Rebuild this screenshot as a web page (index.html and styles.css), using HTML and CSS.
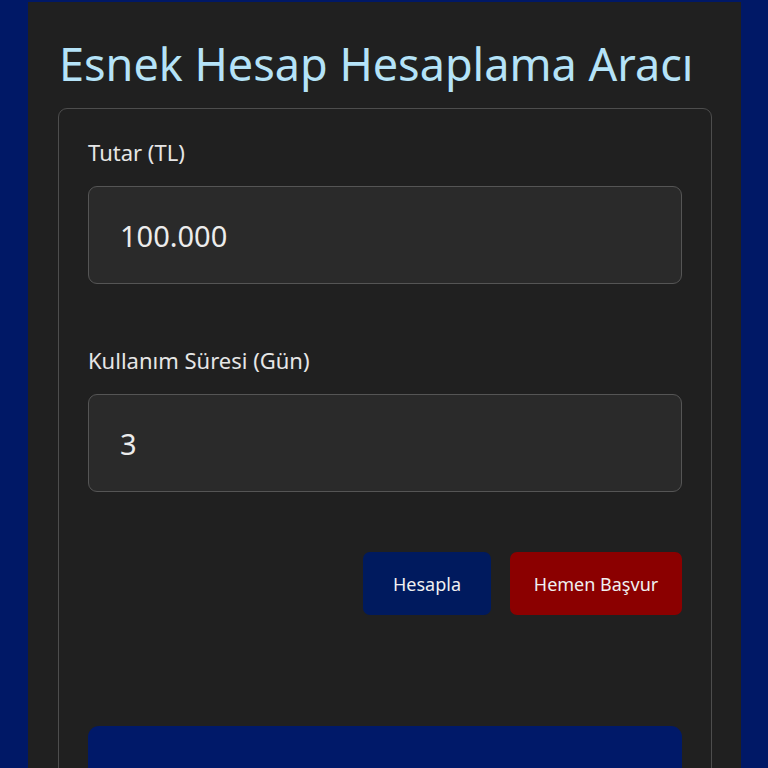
FILE: index.html
```html
<!DOCTYPE html>
<html lang="tr">
<head>
  <meta charset="UTF-8">
  <meta name="viewport" content="width=device-width, initial-scale=1.0">
  <title>Esnek Hesap Hesaplama Aracı</title>
  <link rel="stylesheet" href="styles.css">
</head>
<body>

  <div id="app">
    <h1>Esnek Hesap Hesaplama Aracı</h1>

    <div class="card">
      <div class="field">
        <label for="amount">Tutar (TL)</label>
        <input type="text" id="amount" value="100.000">
      </div>

      <div class="field">
        <label for="days">Kullanım Süresi (Gün)</label>
        <input type="text" id="days" value="3">
      </div>

      <div class="actions">
        <button class="calc">Hesapla</button>
        <button class="apply">Hemen Başvur</button>
      </div>

      <div class="result"></div>
    </div>
  </div>

</body>
</html>
```

FILE: styles.css
```css
body {
  font-family: 'Noto Sans', sans-serif;
  margin: 0;
  padding: 2px 27px 0 28px;
  background-color: #001866;
  height: 100vh;
  overflow: hidden;
  box-sizing: border-box;
}

#app {
  background-color: #202020;
  padding: 34px 29px 40px 30px;
  min-height: 100%;
}

h1 {
  margin: 0 0 16px 1px;
  font-size: 45px;
  font-weight: 400;
  line-height: 56px;
  color: #b5e3f8;
}

.card {
  border: 1px solid #4d4d4d;
  border-radius: 9px;
  padding: 28px 29px 30px 29px;
}

.field {
  margin-bottom: 61px;
}

.field + .field {
  margin-bottom: 60px;
}

label {
  display: block;
  font-size: 22px;
  line-height: 30px;
  color: #e6e6e6;
  margin-bottom: 19px;
}

input {
  display: block;
  width: 100%;
  box-sizing: border-box;
  height: 98px;
  padding: 0 31px;
  font-family: inherit;
  font-size: 29px;
  color: #ececec;
  background-color: #2a2a2a;
  border: 1px solid #555;
  border-radius: 9px;
  outline: none;
}

.actions {
  display: flex;
  justify-content: flex-end;
  gap: 19px;
}

button {
  height: 63px;
  border: none;
  border-radius: 7px;
  font-family: inherit;
  font-size: 18px;
  color: #f0f0f0;
  cursor: pointer;
}

button.calc {
  width: 128px;
  background-color: #001a5e;
}

button.apply {
  width: 172px;
  background-color: #8b0000;
}

.result {
  margin-top: 111px;
  height: 120px;
  border-radius: 11px;
  background-color: #001969;
}
```
